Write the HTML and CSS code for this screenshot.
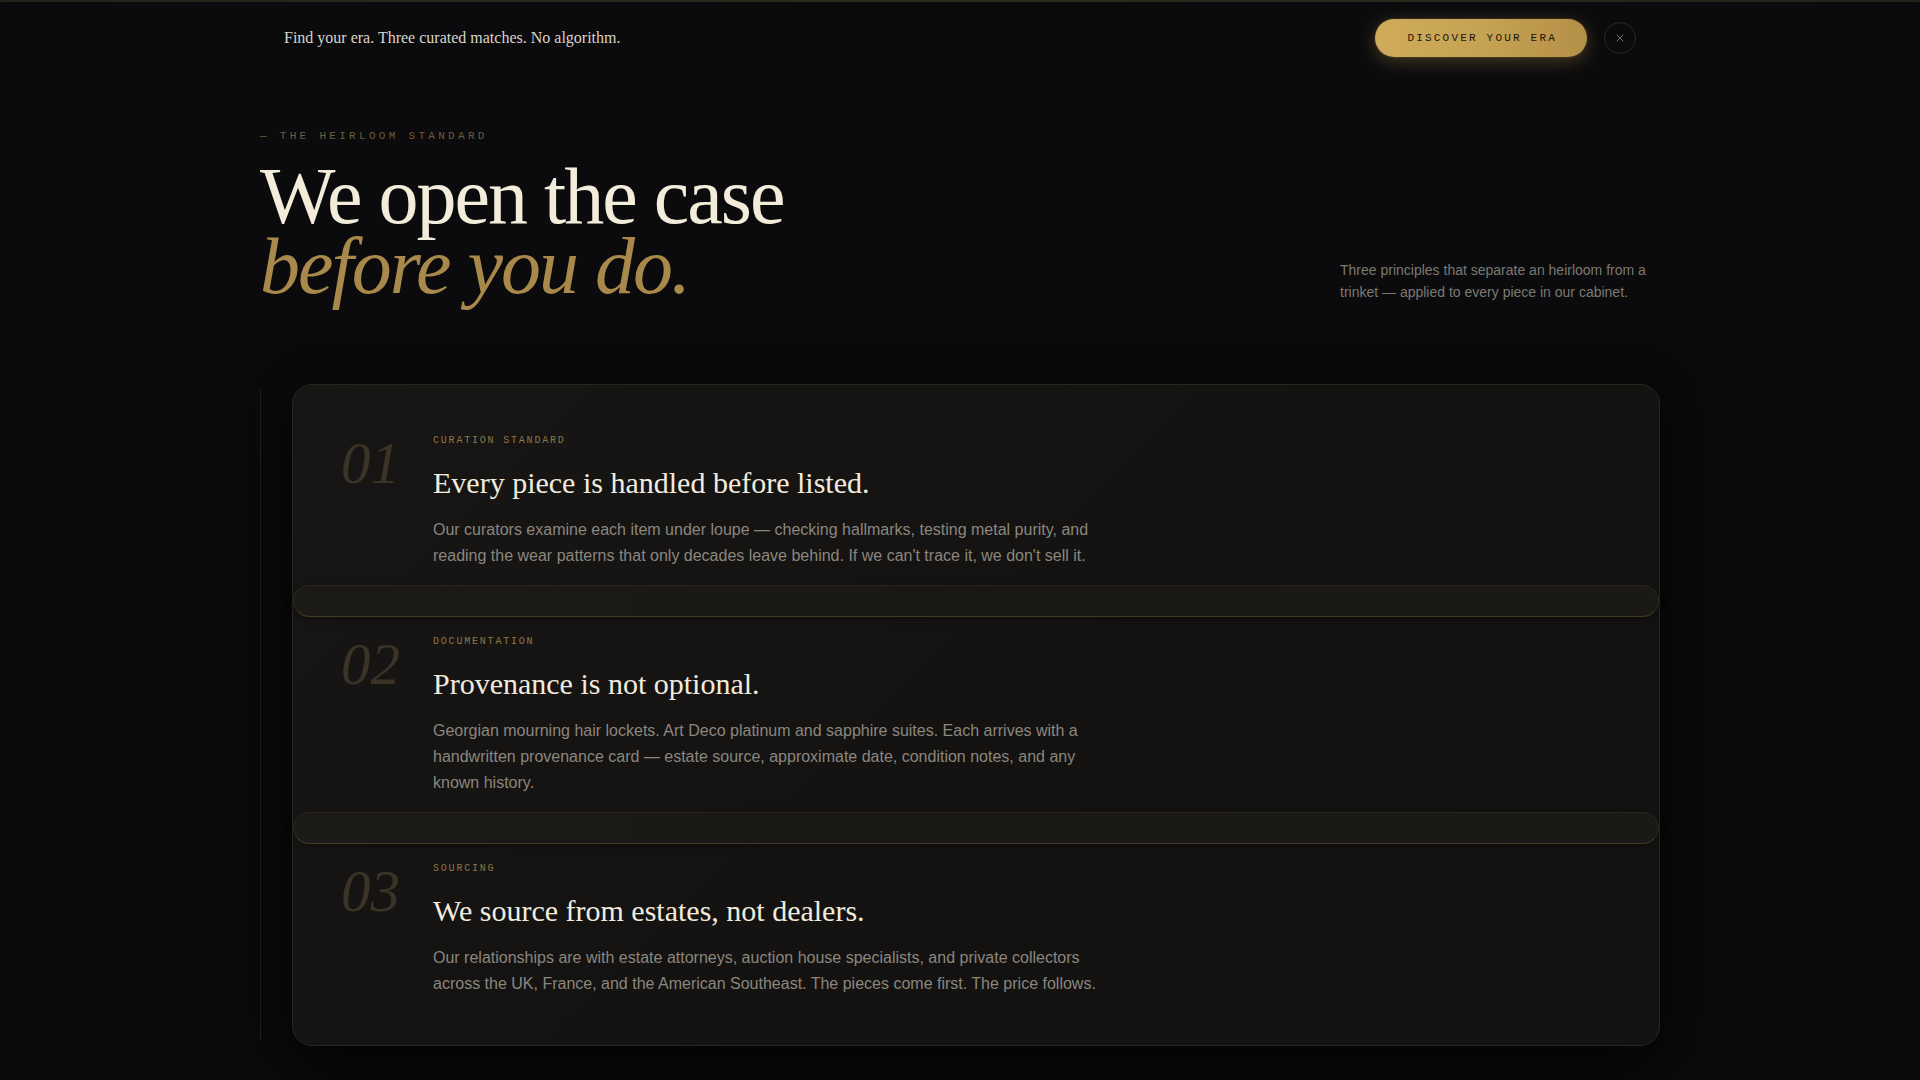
FILE: index.html
```html
<!DOCTYPE html>
<html lang="en">
<head>
<meta charset="utf-8">
<title>The Heirloom Standard</title>
<link rel="stylesheet" href="styles.css">
</head>
<body>
<div class="topline"></div>
<header class="topbar">
  <div class="topbar-inner">
    <p class="topbar-text">Find your era. Three curated matches. No algorithm.</p>
    <div class="topbar-actions">
      <button class="cta">DISCOVER YOUR ERA</button>
      <button class="close" aria-label="Close">
        <svg width="10" height="10" viewBox="0 0 10 10"><path d="M2 2 L8 8 M8 2 L2 8" stroke="#77736c" stroke-width="1" fill="none" stroke-linecap="round"/></svg>
      </button>
    </div>
  </div>
</header>

<main class="section">
  <div class="intro">
    <div class="intro-left">
      <p class="kicker">— THE HEIRLOOM STANDARD</p>
      <h1 class="headline"><span class="hl-line">We open the case</span><em class="hl-line">before you do.</em></h1>
    </div>
    <p class="intro-note">Three principles that separate an heirloom from a trinket — applied to every piece in our cabinet.</p>
  </div>

  <div class="stack">
    <div class="card">
      <article class="row row-first">
        <div class="num">01</div>
        <div class="row-body">
          <p class="row-label">CURATION STANDARD</p>
          <h2 class="row-title">Every piece is handled before listed.</h2>
          <p class="row-text">Our curators examine each item under loupe — checking hallmarks, testing metal purity, and reading the wear patterns that only decades leave behind. If we can't trace it, we don't sell it.</p>
        </div>
      </article>
      <div class="sep"></div>
      <article class="row">
        <div class="num">02</div>
        <div class="row-body">
          <p class="row-label">DOCUMENTATION</p>
          <h2 class="row-title">Provenance is not optional.</h2>
          <p class="row-text">Georgian mourning hair lockets. Art Deco platinum and sapphire suites. Each arrives with a handwritten provenance card — estate source, approximate date, condition notes, and any known history.</p>
        </div>
      </article>
      <div class="sep"></div>
      <article class="row row-last">
        <div class="num">03</div>
        <div class="row-body">
          <p class="row-label">SOURCING</p>
          <h2 class="row-title">We source from estates, not dealers.</h2>
          <p class="row-text">Our relationships are with estate attorneys, auction house specialists, and private collectors across the UK, France, and the American Southeast. The pieces come first. The price follows.</p>
        </div>
      </article>
    </div>
  </div>
</main>
</body>
</html>
```

FILE: styles.css
```css
* { box-sizing: border-box; }

html, body {
  margin: 0;
  padding: 0;
}

body {
  background: #0b0b0d;
  color: #efe8da;
  font-family: "Liberation Serif", "Times New Roman", serif;
  min-height: 1080px;
  overflow: hidden;
}

.topline {
  height: 2px;
  background: linear-gradient(90deg, #23231a, #2e2c1c 50%, #23231a);
}

.topbar-inner {
  max-width: 1400px;
  margin: 0 auto;
  padding: 17px 24px 17px;
  display: flex;
  align-items: center;
  justify-content: space-between;
}

.topbar-text {
  margin: 0;
  font-family: "Liberation Serif", serif;
  font-size: 16px;
  color: #d9d3c7;
}

.topbar-actions {
  display: flex;
  align-items: center;
  gap: 17px;
}

.cta {
  height: 38px;
  padding: 0 30px 0 32px;
  border: none;
  border-radius: 19px;
  background: linear-gradient(90deg, #cfab5b 0%, #c5a153 55%, #b48f47 100%);
  color: #1c160a;
  font-family: "Liberation Mono", "DejaVu Sans Mono", monospace;
  font-size: 11px;
  letter-spacing: 0.2em;
  box-shadow: 0 4px 18px rgba(200, 160, 80, 0.32), 0 0 2px rgba(200, 160, 80, 0.4);
  cursor: pointer;
}

.close {
  width: 32px;
  height: 32px;
  border-radius: 50%;
  border: 1px solid #2a2928;
  background: transparent;
  display: flex;
  align-items: center;
  justify-content: center;
  padding: 0;
}

.section {
  max-width: 1400px;
  margin: 0 auto;
  padding-top: 54px;
}

.intro {
  display: flex;
  justify-content: space-between;
  align-items: flex-end;
}

.kicker {
  margin: 0 0 17px;
  font-family: "Liberation Mono", "DejaVu Sans Mono", monospace;
  font-size: 11px;
  line-height: 16px;
  letter-spacing: 0.3em;
  color: #6e5d3c;
}

.headline {
  margin: 0;
  font-family: "Liberation Serif", "Times New Roman", serif;
  font-weight: 400;
  font-size: 80px;
  line-height: 70px;
  letter-spacing: -0.025em;
  color: #f3ecdb;
}

.hl-line {
  display: block;
  height: 70px;
  overflow: visible;
}

.headline em {
  font-style: italic;
  color: #a8894b;
}

.intro-note {
  margin: 0 0 -2px;
  max-width: 320px;
  font-family: "Liberation Sans", Arial, sans-serif;
  font-size: 14px;
  line-height: 22px;
  color: #7c7972;
}

.stack {
  position: relative;
  margin-top: 83px;
  padding-left: 32px;
}

.stack::before {
  content: "";
  position: absolute;
  left: 0;
  top: 6px;
  bottom: 6px;
  width: 1px;
  background: #1d1c1a;
}

.card {
  border: 1px solid #27251f;
  border-radius: 20px;
  background: linear-gradient(135deg, #171614 0%, #131211 60%, #121211 100%);
  box-shadow: 0 30px 80px rgba(0, 0, 0, 0.55), 0 0 40px rgba(0, 0, 0, 0.35);
}

.row {
  display: grid;
  grid-template-columns: 64px 1fr;
  column-gap: 28px;
  padding: 0 48px;
}

.row-first { padding-top: 49px; }
.row-last { padding-bottom: 48px; }

.num {
  font-family: "Liberation Serif", serif;
  font-style: italic;
  font-size: 59px;
  line-height: 1;
  color: #3b3426;
}

.row-body {
  max-width: 680px;
}

.row-label {
  margin: 0 0 17px;
  font-family: "Liberation Mono", "DejaVu Sans Mono", monospace;
  font-size: 10px;
  line-height: 14px;
  letter-spacing: 0.18em;
  color: #8f7748;
}

.row-title {
  margin: 0 0 16px;
  font-family: "Liberation Serif", serif;
  font-weight: 400;
  font-size: 30px;
  line-height: 36px;
  color: #f1ebde;
}

.row-text {
  margin: 0;
  font-family: "Liberation Sans", Arial, sans-serif;
  font-size: 16px;
  line-height: 26px;
  color: #8b867e;
}

.sep {
  height: 32px;
  margin: 16px 0 18px;
  border-radius: 16px;
  background: linear-gradient(90deg, #1c1a16 0%, #1a1815 50%, #1b1916 100%);
  border: 1px solid rgba(150, 130, 90, 0.13);
  border-bottom-color: rgba(170, 140, 80, 0.28);
  box-shadow: 0 2px 6px rgba(0, 0, 0, 0.35);
}
```
